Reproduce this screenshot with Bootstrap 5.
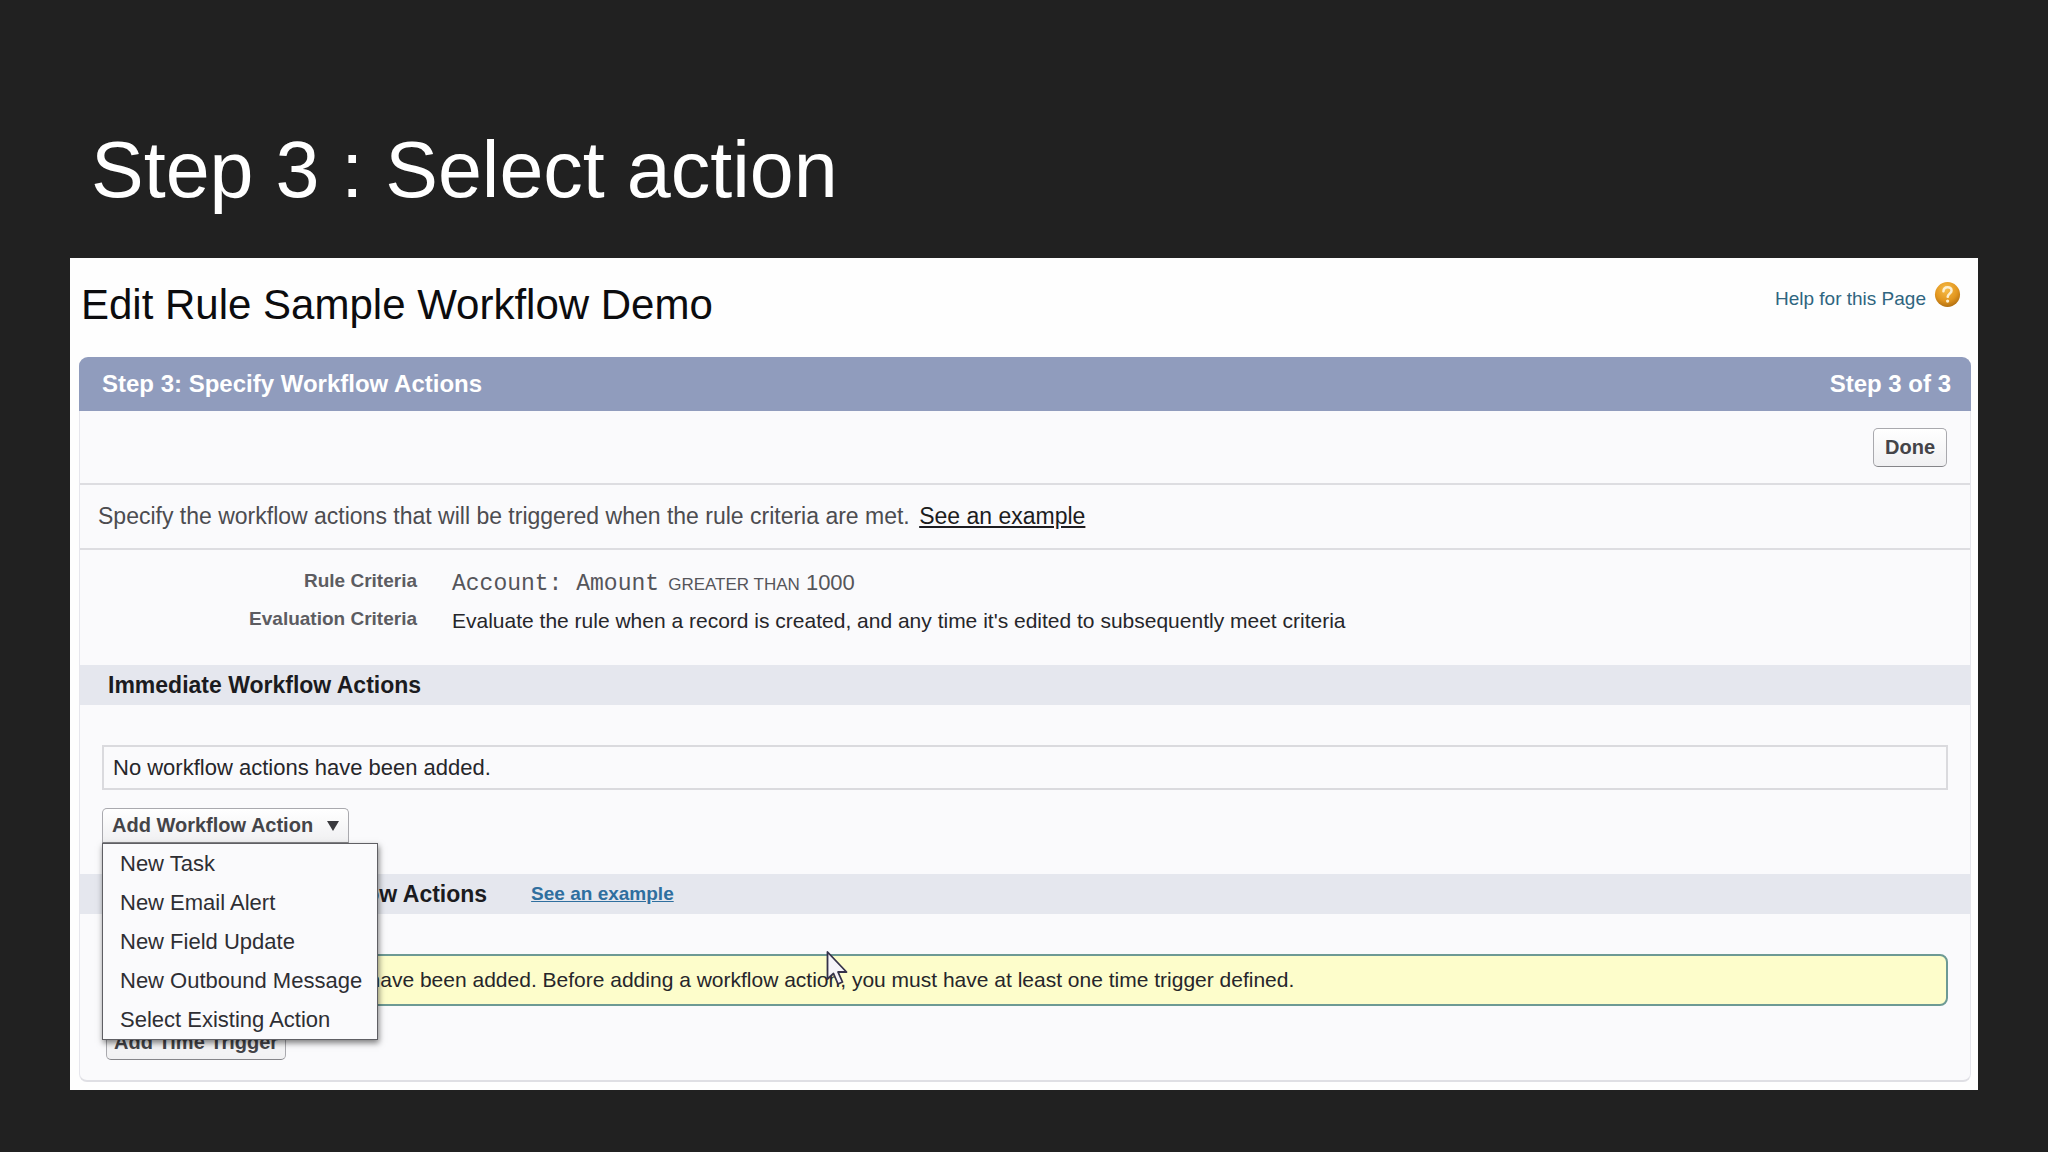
<!DOCTYPE html>
<html lang="en">
<head>
<meta charset="utf-8">
<meta name="viewport" content="width=device-width, initial-scale=1">
<title>Step 3 : Select action</title>
<link href="https://cdn.jsdelivr.net/npm/bootstrap@5.3.0/dist/css/bootstrap.min.css" rel="stylesheet">
<style>
  body { background: #212121; color: #26262a; font-family: "Liberation Sans", Arial, sans-serif; font-size: 21px; line-height: 38px; }
  .slide { padding: 122px 70px 63px; }
  .slide-title { font-size: 79px; line-height: 96px; font-weight: 400; color: #fff; margin: 0 0 40px 21px; }
  .sheet { background: #fefefe; padding: 22px 7px 8px 9px; }
  .rule-title { font-size: 42px; line-height: 50px; font-weight: 400; color: #0c0c0e; margin: 0 0 27px 2px; }
  .help-link { font-size: 19px; line-height: 24px; color: #2f6580; padding: 7px 10px 0 0; gap: 8px; }
  .help-link svg { width: 27px; height: 27px; margin-top: -6px; }
  .panel { background: #fafafc; border: 1px solid #e6e6ec; border-bottom: 2px solid #dfdfe4; border-radius: 9px 9px 8px 8px; }
  .panel-bar { background: #909cbd; color: #fff; font-size: 24px; line-height: 54px; font-weight: 700; margin: -1px -1px 0; padding: 0 20px 0 23px; border-radius: 9px 9px 0 0; }
  .panel-bar h2 { font: inherit; margin: 0; }
  .rule-line { border-bottom: 2px solid #dddde1; }
  .done-row { height: 74px; padding: 0 23px; }
  .intro { font-size: 23px; line-height: 63px; padding: 0 18px; color: #4c4c50; }
  .intro a { color: #1c1c20; margin-left: 3px; }
  .criteria { padding: 14px 0 25px; }
  .criteria-row { height: 38px; }
  .criteria dt { width: 337px; text-align: right; font-size: 19px; line-height: 33px; color: #5c5c61; }
  .criteria dd { margin: 0 0 0 35px; }
  .criteria .expr { color: #55555a; font-size: 22px; }
  .criteria .field-name { font-family: "Liberation Mono", monospace; font-size: 23px; line-height: 1; margin-right: 3px; }
  .criteria .operator { font-size: 17px; }
  .section-bar { background: #e5e7ee; line-height: 40px; padding: 0 28px; }
  .section-bar h3 { font-size: 23px; line-height: 40px; font-weight: 700; margin: 0; color: #1b1b20; }
  .section-bar a { font-size: 19px; font-weight: 700; color: #2f6f9f; }
  .time-bar { gap: 44px; }
  .section-body { padding: 40px 22px 0; }
  .empty-box { font-size: 22px; border: 2px solid #dadade; line-height: 41px; padding: 0 9px; margin-bottom: 18px; }
  .time-box { background: #fdfdcb; border: 2px solid #6d9a94; border-radius: 8px; line-height: 48px; padding: 0 72px; margin-bottom: 19px; }
  .btn-sf { font-size: 20px; font-weight: 700; line-height: 33px; color: #444448; padding: 0 7px; border: 1px solid #a9a9ae; border-bottom-color: #858589; border-radius: 5px; background: linear-gradient(#fff, #f0f0f2); }
  .btn-done { line-height: 37px; padding: 0 11px; }
  .btn-menu { border-radius: 5px 5px 0 0; padding: 0 9px; gap: 14px; }
  .btn-menu svg { width: 12px; height: 10px; }
  .dropdown { margin-bottom: 31px; }
  .action-menu { top: 100%; left: 0; width: 276px; padding: 0; margin: 0; border: 1px solid #5f5f64; border-radius: 0; background: #fafafc; box-shadow: 1px 3px 6px rgba(0,0,0,.5); --bs-dropdown-font-size: 22px; }
  .action-menu .dropdown-item { line-height: 39px; padding: 0 17px; color: #2e2e33; }
  .trigger-row { padding: 0 4px 20px; }
  .pointer { left: 722px; top: -6px; width: 23px; height: 37px; }
</style>
<script src="https://cdn.jsdelivr.net/npm/bootstrap@5.3.0/dist/js/bootstrap.bundle.min.js" defer></script>
</head>
<body>
<main class="slide">
  <h1 class="slide-title">Step 3 : Select action</h1>
  <div class="sheet">
    <header class="d-flex justify-content-between align-items-start">
      <h2 class="rule-title">Edit Rule Sample Workflow Demo</h2>
      <a href="#" class="help-link d-flex text-decoration-none">Help for this Page
        <svg viewBox="0 0 28 28" aria-hidden="true">
          <defs><radialGradient id="amber" cx=".45" cy=".3" r=".75"><stop offset="0" stop-color="#f7bd4a"/><stop offset=".6" stop-color="#e2961f"/><stop offset="1" stop-color="#a8680f"/></radialGradient></defs>
          <circle cx="14" cy="14" r="13" fill="url(#amber)"/>
          <path d="M9.8 10.6c.2-5.6 8.600-5.400 8.400-.6-.1 3-3.800 3.200-4 6.400" fill="none" stroke="#fdf0d2" stroke-width="2.600" stroke-linecap="round"/>
          <circle cx="14.100" cy="20.800" r="1.700" fill="#fdf0d2"/>
        </svg>
      </a>
    </header>

    <section class="panel">
      <div class="panel-bar d-flex justify-content-between">
        <h2>Step 3: Specify Workflow Actions</h2>
        <span>Step 3 of 3</span>
      </div>
      <div class="done-row rule-line d-flex justify-content-end align-items-center">
        <button type="button" class="btn btn-sf btn-done">Done</button>
      </div>
      <div class="intro rule-line">Specify the workflow actions that will be triggered when the rule criteria are met. <a href="#">See an example</a></div>

      <dl class="criteria mb-0">
        <div class="criteria-row d-flex">
          <dt>Rule Criteria</dt>
          <dd class="expr"><span class="field-name">Account: Amount</span> <span class="operator">GREATER THAN</span> 1000</dd>
        </div>
        <div class="criteria-row d-flex">
          <dt>Evaluation Criteria</dt>
          <dd>Evaluate the rule when a record is created, and any time it's edited to subsequently meet criteria</dd>
        </div>
      </dl>

      <div class="section-bar"><h3>Immediate Workflow Actions</h3></div>
      <div class="section-body">
        <div class="empty-box">No workflow actions have been added.</div>
        <div class="dropdown d-flex">
          <button type="button" class="btn btn-sf btn-menu d-flex align-items-center" aria-expanded="true">Add Workflow Action
            <svg viewBox="0 0 12 10" aria-hidden="true"><path d="M0 0h12L6 10z" fill="#3a3a3e"/></svg>
          </button>
          <ul class="dropdown-menu action-menu show">
            <li><a class="dropdown-item" href="#">New Task</a></li>
            <li><a class="dropdown-item" href="#">New Email Alert</a></li>
            <li><a class="dropdown-item" href="#">New Field Update</a></li>
            <li><a class="dropdown-item" href="#">New Outbound Message</a></li>
            <li><a class="dropdown-item" href="#">Select Existing Action</a></li>
          </ul>
        </div>
      </div>

      <div class="section-bar time-bar d-flex"><h3>Time-Dependent Workflow Actions</h3><a href="#">See an example</a></div>
      <div class="section-body">
        <div class="time-box position-relative">No workflow actions have been added. Before adding a workflow action, you must have at least one time trigger defined.
          <svg class="pointer position-absolute" viewBox="0 0 23 37" aria-hidden="true"><path d="M1.500 2v27l6-5.500 4.500 10.500 4.500-2-4.500-10h8.500z" fill="#f6f4fa" stroke="#35324a" stroke-width="1.800" stroke-linejoin="round"/></svg>
        </div>
        <div class="trigger-row d-flex"><button type="button" class="btn btn-sf">Add Time Trigger</button></div>
      </div>
    </section>
  </div>
</main>
</body>
</html>
